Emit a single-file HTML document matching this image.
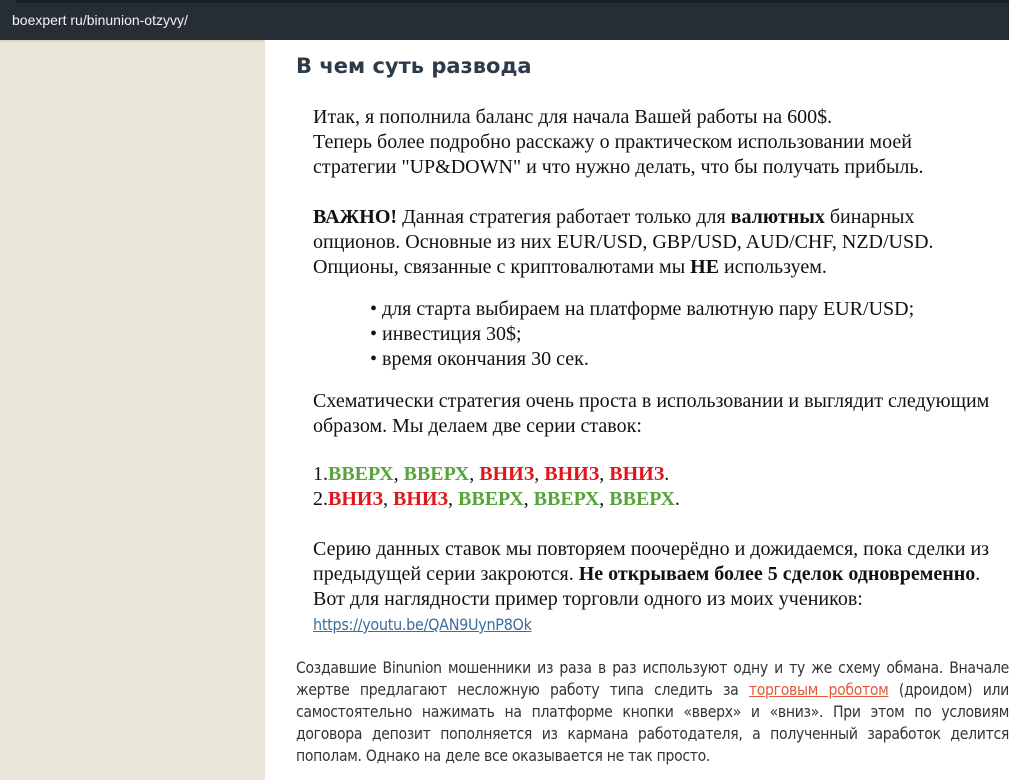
<!DOCTYPE html>
<html><head><meta charset="utf-8"><style>
body{margin:0;width:1009px;height:778px;overflow:hidden;background:#fff;position:relative;font-family:"Liberation Serif",serif}
.bar{position:absolute;left:0;top:0;width:1009px;height:40px;background:#262d35}
.bar .top{position:absolute;left:16px;top:0;right:0;height:3px;background:#1a1f25}
.bar span{position:absolute;left:12px;top:12px;color:#f2f2f2;font:14px "Liberation Sans",sans-serif}
.side{position:absolute;left:0;top:40px;width:265px;height:738px;background:#ebe6da;border-top:2px solid #e0d6c6}
h2{position:absolute;left:296px;top:54px;margin:0;font:bold 21px "DejaVu Sans","Liberation Sans",sans-serif;color:#2c3a4a}
.t{position:absolute;left:313px;font-size:20px;line-height:25px;color:#111;white-space:nowrap}
.g{color:#58a33c;font-weight:bold}.r{color:#e0151b;font-weight:bold}
ul{margin:0;padding:0;list-style:none}
li:before{content:"•";position:absolute;left:57px}
li{padding-left:69px}
a{color:#3d6d9e;text-decoration:underline}
.b{position:absolute;left:296px;top:657px;width:713px;font:15.6px/22px "DejaVu Sans Condensed","Liberation Sans",sans-serif;color:#333;letter-spacing:-0.3px}
.b div{text-align:justify;text-align-last:justify;white-space:nowrap}
.b div:last-child{text-align-last:left}
.b a{color:#e05a3a}
</style></head><body>
<div class="bar"><div class="top"></div><span>boexpert ru/binunion-otzyvy/</span></div>
<div class="side"></div>
<h2>В чем суть развода</h2>
<div class="t" style="top:105px">Итак, я пополнила баланс для начала Вашей работы на 600$.<br>Теперь более подробно расскажу о практическом использовании моей<br>стратегии "UP&amp;DOWN" и что нужно делать, что бы получать прибыль.</div>
<div class="t" style="top:205px"><b>ВАЖНО!</b> Данная стратегия работает только для <b>валютных</b> бинарных<br>опционов. Основные из них EUR/USD, GBP/USD, AUD/CHF, NZD/USD.<br>Опционы, связанные с криптовалютами мы <b>НЕ</b> используем.</div>
<div class="t" style="top:297px"><ul><li>для старта выбираем на платформе валютную пару EUR/USD;</li><li>инвестиция 30$;</li><li>время окончания 30 сек.</li></ul></div>
<div class="t" style="top:389px">Схематически стратегия очень проста в использовании и выглядит следующим<br>образом. Мы делаем две серии ставок:</div>
<div class="t" style="top:462px">1.<span class="g">ВВЕРХ</span>, <span class="g">ВВЕРХ</span>, <span class="r">ВНИЗ</span>, <span class="r">ВНИЗ</span>, <span class="r">ВНИЗ</span>.<br>2.<span class="r">ВНИЗ</span>, <span class="r">ВНИЗ</span>, <span class="g">ВВЕРХ</span>, <span class="g">ВВЕРХ</span>, <span class="g">ВВЕРХ</span>.</div>
<div class="t" style="top:537px">Серию данных ставок мы повторяем поочерёдно и дожидаемся, пока сделки из<br>предыдущей серии закроются. <b>Не открываем более 5 сделок одновременно</b>.<br>Вот для наглядности пример торговли одного из моих учеников:<br><a style="font:16px 'DejaVu Sans Condensed','Liberation Sans',sans-serif;letter-spacing:-0.3px">https://youtu.be/QAN9UynP8Ok</a></div>
<div class="b">
<div>Создавшие Binunion мошенники из раза в раз используют одну и ту же схему обмана. Вначале</div>
<div>жертве предлагают несложную работу типа следить за <a>торговым роботом</a> (дроидом) или</div>
<div>самостоятельно нажимать на платформе кнопки «вверх» и «вниз». При этом по условиям</div>
<div>договора депозит пополняется из кармана работодателя, а полученный заработок делится</div>
<div>пополам. Однако на деле все оказывается не так просто.</div>
</div>
</body></html>
